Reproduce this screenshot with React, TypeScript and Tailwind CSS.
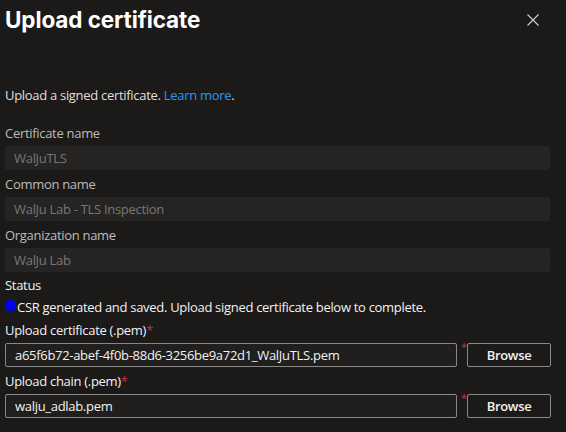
import React from "react";

const Label = ({ children, req, dim }: { children: React.ReactNode; req?: boolean; dim?: boolean }) => (
  <div className={`h-[19px] leading-[19px] text-[13px] tracking-[-0.3px] ${dim ? "text-[#bebbb8]" : "text-[#f3f2f1]"}`}>
    {children}
    {req && <span className="text-[#c4314b]">*</span>}
  </div>
);

const Disabled = ({ value }: { value: string }) => (
  <div className="h-[24px] w-[545px] rounded-[2px] bg-[#252423] pl-[9px] text-[13px] tracking-[-0.3px] leading-[24px] text-[#797775]">
    {value}
  </div>
);

const FileRow = ({ value }: { value: string }) => (
  <div className="flex items-start">
    <div className="h-[24px] w-[452px] rounded-[2px] border border-[#8a8886] bg-[#201f1e] pl-[9px] text-[13px] tracking-[-0.3px] leading-[22px] text-[#f3f2f1]">
      {value}
    </div>
    <span className="ml-[4px] w-[6px] text-[11px] leading-[8px] text-[#c4314b]">*</span>
    <button className="h-[24px] w-[84px] rounded-[2px] border border-[#8a8886] bg-[#1b1a19] text-[13px] font-semibold tracking-[-0.3px] leading-[22px] text-[#f3f2f1]">
      Browse
    </button>
  </div>
);

export default function App() {
  return (
    <div
      className="h-[432px] w-[566px] overflow-hidden bg-[#1b1a19] pl-[5px] text-[#f3f2f1]"
      style={{ fontFamily: '"Open Sans", "Noto Sans", sans-serif' }}
    >
      <div className="flex h-[40px] items-center justify-between pr-[27px]">
        <h1 className="text-[22.5px] font-bold tracking-[-0.1px] text-white" style={{ fontFamily: "Inter, sans-serif" }}>
          Upload certificate
        </h1>
        <svg width="12" height="12" viewBox="0 0 12 12">
          <path d="M0.5 0.5L11.5 11.5M11.5 0.5L0.5 11.5" stroke="#d2d0ce" strokeWidth="1.1" />
        </svg>
      </div>
      <div className="mt-[46px] h-[19px] text-[13px] tracking-[-0.3px] leading-[19px] text-[#e1dfdd]">
        Upload a signed certificate. <span className="text-[#2899f5]">Learn more</span>.
      </div>
      <div className="mt-[19px] flex flex-col">
        <Label dim>Certificate name</Label>
        <div className="mt-[3px]"><Disabled value="WalJuTLS" /></div>
        <div className="mt-[5px]"><Label dim>Common name</Label></div>
        <div className="mt-[3px]"><Disabled value="WalJu Lab - TLS Inspection" /></div>
        <div className="mt-[5px]"><Label dim>Organization name</Label></div>
        <div className="mt-[3px]"><Disabled value="WalJu Lab" /></div>
        <div className="mt-[4px] h-[19px] text-[13px] tracking-[-0.3px] leading-[19px] text-[#f3f2f1]">Status</div>
        <div className="mt-[3px] flex h-[19px] items-center text-[13px] tracking-[-0.3px] leading-[19px] text-[#f3f2f1]">
          <span className="mr-[1px] flex h-[11px] w-[11px] -translate-y-[2px] items-center justify-center rounded-full bg-[#0000ff]">
            <span className="h-[4px] w-[1px] translate-y-[1px] bg-[#1010a0]" />
          </span>
          CSR generated and saved. Upload signed certificate below to complete.
        </div>
        <div className="mt-[4px]"><Label req>Upload certificate (.pem)</Label></div>
        <div className="mt-[3px]"><FileRow value="a65f6b72-abef-4f0b-88d6-3256be9a72d1_WalJuTLS.pem" /></div>
        <div className="mt-[5px]"><Label req>Upload chain (.pem)</Label></div>
        <div className="mt-[3px]"><FileRow value="walju_adlab.pem" /></div>
      </div>
    </div>
  );
}
